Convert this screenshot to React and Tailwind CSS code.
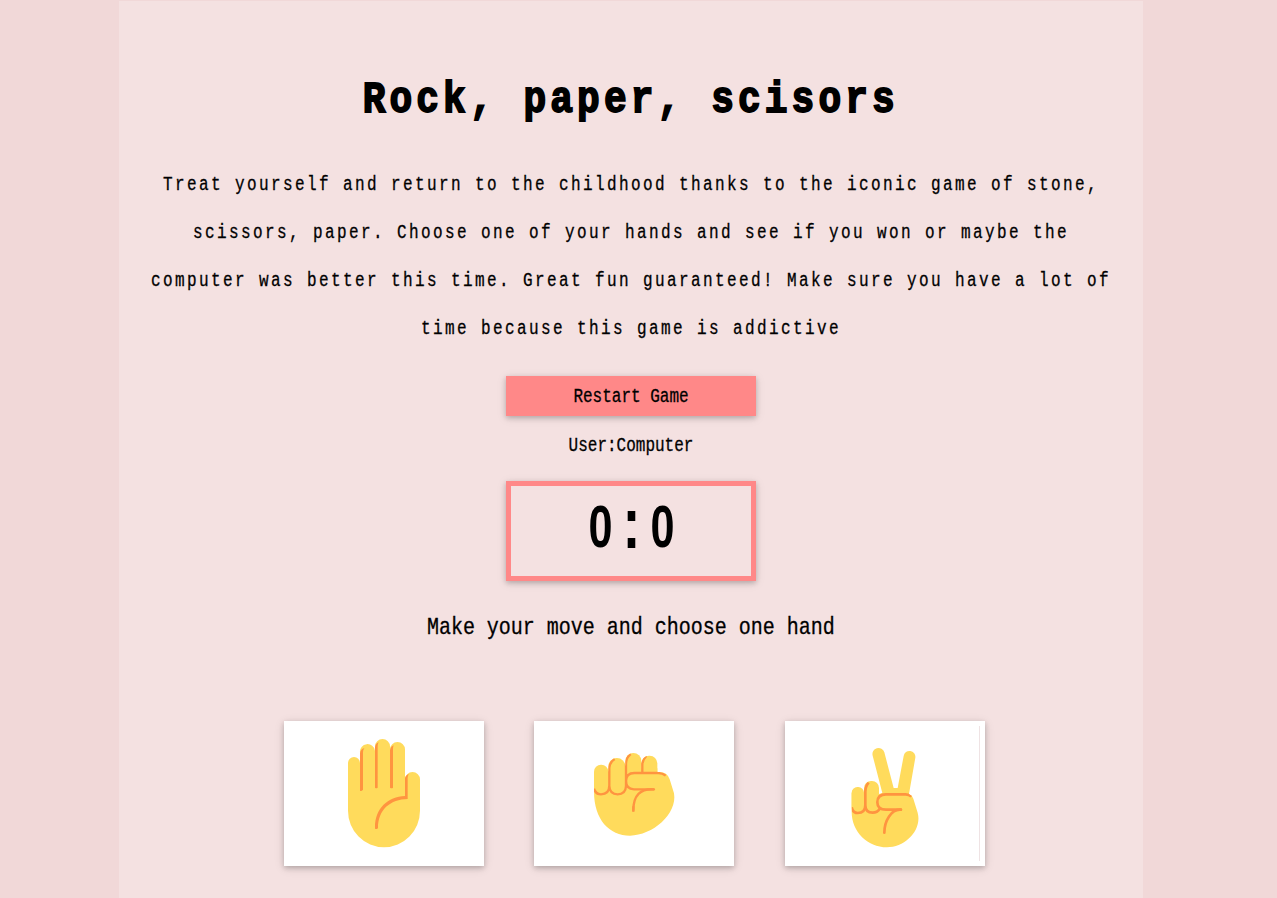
import React from "react";

const YELLOW = "#ffdb5c";
const ORANGE = "#ff9440";

function Hand({ id, viewBox, shape, children, extra }) {
  return (
    <svg viewBox={viewBox} className="block h-[145px] w-[200px]">
      <clipPath id={id}>{shape}</clipPath>
      <g fill={YELLOW}>{shape}</g>
      <g clipPath={`url(#${id})`}>{children}</g>
      {extra}
    </svg>
  );
}

function Paper() {
  return (
    <svg viewBox="42 33 600 435" className="block h-[145px] w-[200px]">
      <path
        fill={YELLOW}
        d="M234 159a18 18 0 0 1 36 0V127a22.5 22 0 0 1 45 -5V109a22.5 22 0 0 1 45 0V118a22.5 22 0 0 1 45 0V208a22.5 22 0 0 1 45 0V302a108 110 0 0 1-216 0Z"
      />
      <path
        fill={ORANGE}
        d="M270 130q2-13 13-16q-4 5-4 13V239q-5 6-9 3ZM315 112q2-12 11-15q-3 5-3 12V233q-4 3-8 0ZM360 121q2-12 11-15q-2 5-2 12V233q-4 3-9 0ZM405 205q1-9 12-13q-4 4-4 12V267C362 268 324 298 324 354q-2 5-9 2C313 297 352 260 405 258Z"
      />
    </svg>
  );
}

function Rock() {
  return (
    <Hand
      id="rock-shape"
      viewBox="42 33 600 435"
      shape={
        <>
          <rect x="222" y="164" width="43" height="96" rx="21" />
          <rect x="265" y="144" width="51" height="110" rx="25" />
          <rect x="316" y="129" width="48" height="110" rx="24" />
          <rect x="364" y="137" width="48" height="90" rx="23" />
          <path d="M222 186H265V175H412V186h6q24 0 31 22l13 42c11 62-65 127-132 127c-62 0-108-49-108-132Z" />
        </>
      }
    >
      <g fill="none" stroke={ORANGE} strokeWidth="7">
        <path d="M222 236q5 17 21 17q25 0 25-27V174q1-17 16-27M268 228q1 25 25 25t25-25V160q1-18 14-28M367 189V164q0-14 12-26M318 214q0-25 25-25h72q12 0 22 8M318 211q0 27 24 27h60" />
        <path d="M402 238q-62-4-62 63" strokeLinecap="round" />
        <path d="M340 292v10" strokeLinecap="square" />
      </g>
    </Hand>
  );
}

function Scissors() {
  return (
    <Hand
      id="scissors-shape"
      viewBox="45 33 600 435"
      shape={
        <>
          <rect x="245" y="231" width="37" height="80" rx="17" />
          <rect x="282" y="213" width="45" height="98" rx="21" />
          <path d="M245 248H282V240H327V252L337 249L308 137a17 17 0 0 1 35-10L371 234H383L401 138a17 17 0 0 1 35 5L417 252q10 4 13 14l13 42c14 52-37 104-92 104c-59 0-106-48-106-106Z" />
        </>
      }
      extra={<rect x="627" y="48" width="3" height="405" fill="#efe3e4" />}
    >
      <g fill="none" stroke={ORANGE} strokeWidth="8">
        <path d="M245 292q4 17 18 17q23 0 23-24V245q0-16 10-27M286 286q0 22 22 22q14 0 21-11M395 299h-47q-26 0-26-22q0-24 26-24h59q10 0 17 7" />
        <path d="M393 299c-29-3-50 34-50 69" strokeLinecap="round" />
      </g>
    </Hand>
  );
}

function Card({ label, children }) {
  return (
    <button
      aria-label={label}
      className="h-[145px] w-[200px] shrink-0 bg-white shadow-[0_2px_5px_rgba(0,0,0,0.2),0_2px_10px_rgba(0,0,0,0.12)]"
    >
      {children}
    </button>
  );
}

export default function App() {
  return (
    <div className="h-[898px] overflow-hidden bg-[#f1d8d8] pt-px pl-[119px] font-['Liberation_Mono',monospace] text-black">
      <main className="flex h-[897px] w-[1024px] flex-col items-center bg-[#f4e1e1]">
        <h1 className="mt-[67px] h-[64px] scale-x-[.86] text-[44px] leading-[64px] font-bold tracking-[4.77px] whitespace-nowrap [-webkit-text-stroke:1.8px_black]">
          Rock, paper, scisors
        </h1>
        <p className="mt-[29px] w-[1280px] shrink-0 scale-x-[.8] text-center text-[20px] leading-[48px] tracking-[3px] whitespace-nowrap [-webkit-text-stroke:0.3px_black]">
          Treat yourself and return to the childhood thanks to the iconic game of stone,
          <br />
          scissors, paper. Choose one of your hands and see if you won or maybe the
          <br />
          computer was better this time. Great fun guaranteed! Make sure you have a lot of
          <br />
          time because this game is addictive
        </p>
        <button className="mt-[23px] flex h-[40px] w-[250px] shrink-0 items-center justify-center bg-[#ff8888] pt-[2px] shadow-[0_2px_5px_rgba(0,0,0,0.2),0_2px_10px_rgba(0,0,0,0.1)]">
          <span className="scale-x-[.8] text-[20px] leading-[24px] whitespace-nowrap [-webkit-text-stroke:0.3px_black]">
            Restart Game
          </span>
        </button>
        <p className="mt-[18px] h-[24px] scale-x-[.8] text-[20px] leading-[24px] whitespace-nowrap [-webkit-text-stroke:0.3px_black]">
          User:Computer
        </p>
        <div className="mt-[23px] flex h-[100px] w-[250px] shrink-0 justify-center border-[5px] border-[#ff8888] pt-[7px] shadow-[0_2px_5px_rgba(0,0,0,0.2),0_2px_10px_rgba(0,0,0,0.1)]">
          <div className="flex font-['Liberation_Sans',sans-serif] text-[60px] leading-[68px] font-bold">
            <span className="flex w-[31px] scale-x-[.72] justify-center">0</span>
            <span className="flex w-[31px] origin-[50%_80%] translate-y-[3px] scale-x-[.9] scale-y-[1.2] justify-center">
              :
            </span>
            <span className="flex w-[31px] scale-x-[.72] justify-center">0</span>
          </div>
        </div>
        <p className="mt-[31px] h-[32px] scale-x-[.833] text-[24px] leading-[32px] whitespace-nowrap [-webkit-text-stroke:0.3px_black]">
          Make your move and choose one hand
        </p>
        <div className="mt-[77px] ml-[7px] flex w-[701px] shrink-0">
          <Card label="Paper">
            <Paper />
          </Card>
          <div className="mr-[51px] ml-[50px]">
            <Card label="Rock">
              <Rock />
            </Card>
          </div>
          <Card label="Scissors">
            <Scissors />
          </Card>
        </div>
      </main>
    </div>
  );
}
